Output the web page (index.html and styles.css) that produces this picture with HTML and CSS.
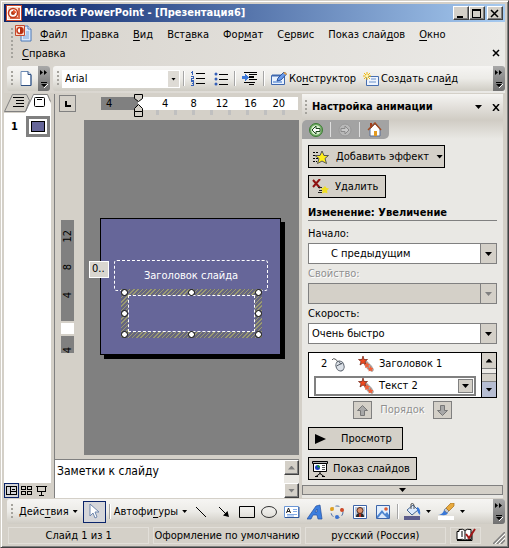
FILE: index.html
```html
<!DOCTYPE html>
<html lang="ru">
<head>
<meta charset="utf-8">
<title>Microsoft PowerPoint - [Презентация6]</title>
<link rel="stylesheet" href="styles.css">
</head>
<body>
<div class="window">
  <header class="titlebar">
    <svg class="app-icon" width="16" height="16" viewBox="0 0 16 16"><rect x=".5" y=".5" width="15" height="15" fill="#fff" stroke="#c8492c"/><path d="M2 2h12v12H2z" fill="#f6d9c8"/><path d="M13 3v10H4" fill="none" stroke="#d9694a" stroke-width="2"/><circle cx="7" cy="8" r="4.500" fill="#fff" stroke="#c23a1c" stroke-width="1.500"/><circle cx="7" cy="8" r="2" fill="#b03a18"/><path d="M7 8V5a3 3 0 0 1 3 3z" fill="#e8562e"/></svg>
    <h1>Microsoft PowerPoint - [Презентация6]</h1>
    <button class="winbtn" aria-label="Свернуть"><svg width="10" height="9" viewBox="0 0 10 9"><path d="M1 7h6v2H1z"/></svg></button>
    <button class="winbtn" aria-label="Развернуть"><svg width="10" height="9" viewBox="0 0 10 9"><path d="M0 0h9v9H0zM1 2v6h7V2z" fill-rule="evenodd"/></svg></button>
    <button class="winbtn close" aria-label="Закрыть"><svg width="10" height="9" viewBox="0 0 10 9"><path d="M1 1l7 7M8 1l-7 7" stroke="#000" stroke-width="1.500"/></svg></button>
  </header>

  <nav class="menu">
    <span class="grip"></span>
    <div class="menu-items">
      <svg class="doc-icon" width="17" height="17" viewBox="0 0 17 17"><path d="M6 1h7l3 3v12H6z" fill="#dbe9fb" stroke="#4a78b8"/><path d="M13 1v3h3" fill="#fff" stroke="#4a78b8"/><path d="M8 11h6M8 13h6M11 7h3M11 9h3" stroke="#7aa4dc"/><path d="M.5.5h9v10h-9z" fill="#f9dccb" stroke="#c8492c"/><circle cx="5" cy="5.500" r="3" fill="#fff" stroke="#c23a1c" stroke-width="1.500"/><path d="M5 5V2.500A3 3 0 0 1 5 8.500z" fill="#b52c10"/></svg>
      <button><u>Ф</u>айл</button>
      <button><u>П</u>равка</button>
      <button><u>В</u>ид</button>
      <button>Вст<u>а</u>вка</button>
      <button>Фор<u>м</u>ат</button>
      <button>С<u>е</u>рвис</button>
      <button>Показ слай<u>д</u>ов</button>
      <button><u>О</u>кно</button>
      <button class="help"><u>С</u>правка</button>
    </div>
    <button class="doc-close" aria-label="Закрыть документ"><svg width="8" height="8" viewBox="0 0 8 8"><path d="M1 1l6 6M7 1L1 7" stroke="#000" stroke-width="1.500"/></svg></button>
  </nav>

  <div class="toolbars">
    <div class="toolbar small">
      <span class="grip"></span>
      <button class="tool new" aria-label="Создать"><svg width="12" height="15" viewBox="0 0 12 15"><path d="M1 .5h7l3 3v11H1z" fill="#fff" stroke="#6d8bb5"/><path d="M11 4v10.500H1" fill="none" stroke="#2f4f80"/><path d="M8 .5v3h3" fill="#cfdcf0" stroke="#2f4f80"/></svg></button>
      <button class="overflow" aria-label="Параметры панели"><svg width="8" height="18" viewBox="0 0 8 18"><path d="M0 0l3 2.500L0 5zM4 0l3 2.500L4 5z" fill="#000"/><path d="M1 12h6v1H1zM1 14h6l-3 3z" fill="#000"/><path d="M4 18l4-4" fill="none" stroke="#fff"/></svg></button>
    </div>
    <div class="toolbar wide">
      <span class="grip"></span>
      <div class="font-box"><select aria-label="Шрифт"><option>Arial</option></select></div>
      <span class="sep"></span>
      <button class="tool" aria-label="Нумерация"><svg width="16" height="15" viewBox="0 0 16 15" shape-rendering="crispEdges"><path d="M2.500 0v4M1 1.500h1M1 5.500h2.500v2H1.500v1.500H4M1 10.500h2.500v4H1M2 12.500h2" fill="none" stroke="#3560b8"/><path d="M6 2.500h9M6 7.500h9M6 12.500h9" stroke="#000"/></svg></button>
      <button class="tool bullets" aria-label="Маркеры"><svg width="14" height="14" viewBox="0 0 14 14"><g fill="#3560b8"><circle cx="2" cy="2" r="1.500"/><circle cx="2" cy="7" r="1.500"/><circle cx="2" cy="12" r="1.500"/></g><path d="M5 2.500h9M5 7.500h9M5 12.500h9" stroke="#000"/></svg></button>
      <span class="sep"></span>
      <button class="tool" aria-label="Увеличить отступ"><svg width="15" height="13" viewBox="0 0 15 13" shape-rendering="crispEdges"><path d="M2 .5h13M7 2.500h8M7 5h5M7 7.500h8M2 10.500h11M7 12.500h5" stroke="#000"/><path d="M7 4h5v2H7z"/><path d="M0 4h3V2l4 3.500L3 9V7H0z" fill="#3c78d8"/></svg></button>
      <span class="sep"></span>
      <button class="tool text"><svg width="16" height="14" viewBox="0 0 16 14"><path d="M.5 3.500h13v9H.5z" fill="#e8f1fd" stroke="#3f68ae"/><path d="M1 3.500h12" stroke="#3f68ae" stroke-width="2"/><path d="M2 10h9" stroke="#8db0e4" stroke-width="2"/><path d="M6 9l1-3 6-6 2.500 2L10 8z" fill="#6a9bea" stroke="#2b549f"/><path d="M12 1l2-1 2 2-1 1z" fill="#e2a04a"/></svg><span>Ко<u>н</u>структор</span></button>
      <button class="tool text"><svg width="16" height="14" viewBox="0 0 16 14"><path d="M3.500 4.500h12v9h-12z" fill="#eef4fd" stroke="#476fb0"/><path d="M8 7h5M6 10h7" stroke="#6b91cc"/><path d="M4 0v8M0 4h8M1 1l6 6M7 1L1 7" stroke="#efb70d"/><circle cx="4" cy="4" r="1.500" fill="#fff7ae"/></svg><span>Создать сла<u>й</u>д</span></button>
      <button class="overflow" aria-label="Параметры панели"><svg width="8" height="18" viewBox="0 0 8 18"><path d="M0 0l3 2.500L0 5zM4 0l3 2.500L4 5z" fill="#000"/><path d="M1 12h6v1H1zM1 14h6l-3 3z" fill="#000"/><path d="M4 18l4-4" fill="none" stroke="#fff"/></svg></button>
    </div>
  </div>

  <main class="work">
    <aside class="outline">
      <div class="tabs">
        <svg width="47" height="19" viewBox="0 0 47 19"><path d="M0 0h47v19H0z" fill="#d4d0c8"/><path d="M21 19l8-18h14l4 9v9z" fill="#fff"/><path d="M.5 17.500L8.500.5h14l3 6-4 11z" fill="#d4d0c8" stroke="#808080"/><path d="M21.500 17.500L29.500.5h14l3 7" fill="none" stroke="#808080"/><path d="M9 3.500h11M12 6.500h8M12 9.500h8M9 12.500h11" stroke="#000" shape-rendering="crispEdges"/><rect x="30.500" y="3.500" width="10" height="9" rx="1" fill="#fff" stroke="#000"/><path d="M33 5.500h5" stroke="#000"/></svg>
      </div>
      <button class="thumb"><b>1</b><span class="thumb-frame"><span class="thumb-slide"></span></span></button>
      <div class="views">
        <button class="view active" aria-label="Обычный"><svg width="11" height="9" viewBox="0 0 11 9" shape-rendering="crispEdges"><path d="M.5.5h10v8H.5zM4.500 0v9M4 5.500h6M6 3.500h3" fill="none" stroke="#000"/></svg></button>
        <button class="view" aria-label="Сортировщик"><svg width="12" height="9" viewBox="0 0 12 9" shape-rendering="crispEdges"><path d="M.5.5h4v3h-4zM6.500.5h4v3h-4zM.5 5.500h4v3h-4zM6.500 5.500h4v3h-4z" fill="none" stroke="#000"/></svg></button>
        <button class="view" aria-label="Показ"><svg width="11" height="10" viewBox="0 0 11 10" shape-rendering="crispEdges"><path d="M0 .5h11M1.500 1v4.500h8V1M5.500 6v3M3 9.500h5" fill="none" stroke="#000"/></svg></button>
      </div>
    </aside>

    <section class="editor">
      <div class="ruler-row">
        <button class="tab-stop" aria-label="Табуляция"><svg width="6" height="6" viewBox="0 0 6 6"><path d="M0 0h2v4h4v2H0z"/></svg></button>
        <div class="hruler">
          <div class="hscale"><div class="margin-part"><span>4</span></div><div class="text-part"><span>4</span><span>8</span><span>12</span><span>16</span><span>20</span></div></div>
          <div class="ticks"></div>
          <svg class="indent" width="9" height="24" viewBox="0 0 9 24"><path d="M.5.5h8v4l-4 3-4-3zM.5 17.500v-3l4-4 4 4v3z" fill="#d4d0c8" stroke="#000"/><path d="M.5 17.500h8v5h-8z" fill="#d4d0c8" stroke="#000"/></svg>
        </div>
      </div>
      <div class="stage-row">
        <div class="vruler"><div class="vtop"><span>12</span><span>8</span><span>4</span></div><div class="vgap"></div><div class="vbottom"><span>4</span></div></div>
        <div class="stage">
          <div class="slide">
            <div class="title-box">Заголовок слайда</div>
            <div class="body-box"><div class="body-inner"></div>
              <i class="h nw"></i><i class="h n"></i><i class="h ne"></i><i class="h w"></i><i class="h e"></i><i class="h sw"></i><i class="h s"></i><i class="h se"></i>
            </div>
            <span class="order-tag">0..</span>
          </div>
        </div>
      </div>
      <div class="notes">
        <textarea aria-label="Заметки">Заметки к слайду</textarea>
        <div class="scroll"><button class="sb" aria-label="Вверх"><i class="up"></i></button><button class="sb" aria-label="Вниз"><i class="down"></i></button></div>
      </div>
    </section>

    <aside class="pane">
      <div class="pane-head"><span class="grip"></span><h2>Настройка анимации</h2><button class="tool" aria-label="Другие области"><i class="down"></i></button><button class="tool" aria-label="Закрыть область"><svg width="8" height="7" viewBox="0 0 8 7"><path d="M1 0l6 7M7 0L1 7" stroke="#000" stroke-width="1.500"/></svg></button></div>
      <div class="pane-nav">
        <div class="nav-tab">
          <button class="tool" aria-label="Назад"><svg width="14" height="14" viewBox="0 0 14 14"><circle cx="7" cy="7" r="6.500" fill="#72ad65" stroke="#3c7a35"/><circle cx="7" cy="7" r="4.800" fill="#d9f0d0"/><path d="M3 7l4-4v2.500h4v3H7V11z" fill="#fff" stroke="#1c451c"/></svg></button>
          <span class="sep"></span>
          <button class="tool" aria-label="Вперед"><svg width="14" height="14" viewBox="0 0 14 14"><circle cx="7" cy="7" r="6" fill="#b8b8b8" stroke="#989898"/><path d="M11 7L7 3v2.500H3v3h4V11z" fill="#c8c8c8" stroke="#8a8a8a"/></svg></button>
          <span class="sep"></span>
          <button class="tool" aria-label="Домой"><svg width="15" height="15" viewBox="0 0 15 15"><path d="M3 7v7h10V7L8 2z" fill="#fff" stroke="#5d6f94"/><path d="M3 1h2v5H3z" fill="#a33c1c"/><path d="M1 8l7-7 6 7" fill="none" stroke="#a04a20" stroke-width="1.500"/><path d="M7 9h3v5H7z" fill="#e49a20"/></svg></button>
        </div>
      </div>
      <div class="pane-body">
        <button class="btn add"><svg width="17" height="16" viewBox="0 0 17 16"><path d="M1 3.500h5M1 6.500h3M1 9.500h5M1 12.500h4" stroke="#000" stroke-dasharray="2 1"/><path d="M10 2l2 4.500h4.500L13 9.500l1.500 5L10 12l-4.500 2.500 1.500-5-4-3H8z" fill="#ffee1c" stroke="#555"/></svg>Добавить эффект<i class="down"></i></button>
        <button class="btn remove"><svg width="17" height="16" viewBox="0 0 17 16"><path d="M1 1l7 8M8 0L1 8" stroke="#8e1010" stroke-width="2"/><path d="M6 8.500h4M7 11.500h3M6 13.500h4" stroke="#222"/><path d="M13 7l1.500 2 2.500.5-2 2 .5 3-2.500-1-3 1 .5-3-2-2 2.500-.5z" fill="#f1df22"/></svg>Удалить</button>
        <h3>Изменение: Увеличение</h3>
        <label for="start">Начало:</label>
        <div class="combo indent-text"><select id="start"><option>С предыдущим</option></select></div>
        <label for="prop" class="off">Свойство:</label>
        <div class="combo off"><select id="prop" disabled><option></option></select></div>
        <label for="speed">Скорость:</label>
        <div class="combo"><select id="speed"><option>Очень быстро</option></select></div>
        <div class="effects">
          <div class="effect-list">
            <div class="effect"><span class="num">2</span><svg width="14" height="15" viewBox="0 0 14 15"><path d="M1 3q1-2 3-1t3 3" fill="none" stroke="#555"/><ellipse cx="9" cy="9" rx="4" ry="5" transform="rotate(-20 9 9)" fill="#dce1e8" stroke="#59616c"/><path d="M5.500 9l6-3M8 4.500l2 3" stroke="#59616c"/></svg><svg class="star" width="16" height="16" viewBox="0 0 16 16"><path d="M6 4l3 1 5 5 2 4-2 2-4-2-4-5z" fill="#a6a6a6"/><path d="M5 0l1 3.500h3.500L7 5.500 8 9 5 7 2 9l1-3.500L.5 3.500H4z" fill="#f04a20" stroke="#702010" stroke-width=".7"/><path d="M9 6l1 2h2l-1.500 1.500.5 2.500-2-1-2 1 .5-2.500L6 8h2zM12.500 10l1 2h2L14 13.500l.5 2-2-1-2 1 .5-2L9.500 12h2z" fill="#f26038"/></svg><span>Заголовок 1</span></div>
            <div class="effect selected"><svg class="star" width="16" height="16" viewBox="0 0 16 16"><path d="M6 4l3 1 5 5 2 4-2 2-4-2-4-5z" fill="#a6a6a6"/><path d="M5 0l1 3.500h3.500L7 5.500 8 9 5 7 2 9l1-3.500L.5 3.500H4z" fill="#f04a20" stroke="#702010" stroke-width=".7"/><path d="M9 6l1 2h2l-1.500 1.500.5 2.500-2-1-2 1 .5-2.500L6 8h2zM12.500 10l1 2h2L14 13.500l.5 2-2-1-2 1 .5-2L9.500 12h2z" fill="#f26038"/></svg><span>Текст 2</span><button class="drop" aria-label="Меню эффекта"><i class="down"></i></button></div>
          </div>
          <div class="effect-scroll"><button aria-label="Вверх"><i class="up"></i></button><span class="track"></span><span class="thumb-bar"></span><button class="hot" aria-label="Вниз"><i class="down"></i></button></div>
        </div>
        <div class="order"><button disabled aria-label="Выше"><svg width="11" height="11" viewBox="0 0 11 11"><path d="M5.500.5l5 5h-3v5h-4v-5h-3z" fill="#a8a8a8" stroke="#777"/></svg></button><span>Порядок</span><button disabled aria-label="Ниже"><svg width="11" height="11" viewBox="0 0 11 11"><path d="M5.500 10.500l5-5h-3v-5h-4v5h-3z" fill="#a8a8a8" stroke="#777"/></svg></button></div>
        <button class="btn play"><svg width="11" height="10" viewBox="0 0 11 10"><path d="M0 0l11 5-11 5z"/></svg>Просмотр</button>
        <button class="btn show"><svg width="16" height="16" viewBox="0 0 16 16"><path d="M.5.5h15v2H.5z" fill="#aaa" stroke="#000"/><path d="M1.500 2.500h13v8h-13z" fill="#fff" stroke="#000"/><circle cx="5.500" cy="6.500" r="2.500" fill="#1d3fc0"/><path d="M5.500 4a2.500 2.500 0 0 1 2.500 2.500H5.500z" fill="#18a028"/><path d="M10 4.500h3M10 6.500h3M10 8.500h3" stroke="#555"/><path d="M8 11v2M4 15.500l4-3 4 3M3 15.500h3M10 15.500h3" fill="none" stroke="#000"/></svg>Показ слайдов</button>
      </div>
      <button class="pane-more" aria-label="Прокрутить вниз"><i class="down"></i></button>
    </aside>
  </main>

  <div class="toolbar draw">
    <span class="grip"></span>
    <button class="tool text"><span>Дейс<u>т</u>вия</span><i class="down small-arrow"></i></button>
    <button class="tool pointer" aria-label="Выбор объектов"><svg width="11" height="17" viewBox="0 0 11 17"><path d="M1 1v12l3-3 2 5 2-1-2-5h4z" fill="#fff" stroke="#6f87ad"/></svg></button>
    <span class="sep"></span>
    <button class="tool text shapes"><span>Автофи<u>г</u>уры</span><i class="down small-arrow"></i></button>
    <div class="draw-tools">
      <button class="tool" aria-label="Линия"><svg width="16" height="16" viewBox="0 0 16 16"><path d="M3 3l10 10" stroke="#000"/></svg></button>
      <button class="tool" aria-label="Стрелка"><svg width="16" height="16" viewBox="0 0 16 16"><path d="M3 3l7 7" stroke="#000"/><path d="M13 13l-1.500-6L7 11.500z"/></svg></button>
      <button class="tool" aria-label="Прямоугольник"><svg width="16" height="16" viewBox="0 0 16 16"><path d="M.5 2.500h15v11H.5z" fill="none" stroke="#000"/></svg></button>
      <button class="tool" aria-label="Овал"><svg width="16" height="16" viewBox="0 0 16 16"><ellipse cx="8" cy="8" rx="7.500" ry="5.500" fill="none" stroke="#333"/></svg></button>
      <button class="tool" aria-label="Надпись"><svg width="16" height="16" viewBox="0 0 16 16"><path d="M.5 2.500h14v11H.5z" fill="#fff" stroke="#6b96d6"/><path d="M1 13.500h14V3" fill="none" stroke="#2e5596"/><path d="M2.500 9l2-5 2 5M3 7.500h3" fill="none" stroke="#222"/><path d="M9 5.500h4M9 7.500h4M3 10.500h10M3 12h7" stroke="#83abe6"/></svg></button>
      <button class="tool" aria-label="WordArt"><svg width="16" height="16" viewBox="0 0 16 16"><path d="M0 15l9-13 4-1 2 14h-4l-1-4H6l-2 4zM8 8h2V5z" fill="#3c7fe0" fill-rule="evenodd" stroke="#244f9d" stroke-width=".7"/></svg></button>
      <button class="tool" aria-label="Диаграмма"><svg width="16" height="16" viewBox="0 0 16 16"><circle cx="8" cy="8" r="6" fill="none" stroke="#4d6ea5" stroke-dasharray="4 2.500"/><circle cx="3" cy="5" r="2" fill="#e2a01c"/><circle cx="13" cy="6" r="2" fill="#d04a28"/><circle cx="8" cy="13" r="2" fill="#3a72d0"/></svg></button>
      <button class="tool" aria-label="Картинка"><svg width="16" height="16" viewBox="0 0 16 16"><path d="M1.500 1.500h13v13h-13z" fill="#fff" stroke="#3c64a8"/><path d="M3 3h10v10H3z" fill="#b9c9df"/><path d="M4 13q0-4 4-4t4 4z" fill="#2a2a2a"/><circle cx="8" cy="6.500" r="3" fill="#d9906a" stroke="#5a2d1c"/><path d="M7 10h2v3H7z" fill="#c03020"/></svg></button>
      <button class="tool" aria-label="Рисунок"><svg width="16" height="16" viewBox="0 0 16 16"><path d="M1.500 1.500h13v13h-13z" fill="#e2effd" stroke="#3c64a8"/><path d="M2 14v-2l5-6 3 4 2-2 2 3v3z" fill="#4d84cf"/><path d="M3 14l4-5 5 5z" fill="#dbe8fa"/><circle cx="11" cy="5" r="1.800" fill="#dc5a32"/></svg></button>
    </div>
    <span class="sep"></span>
    <button class="tool split" aria-label="Цвет заливки"><svg width="18" height="17" viewBox="0 0 18 17"><path d="M3 7l6-5 5 5-6 5z" fill="#dce9fb" stroke="#45658f"/><path d="M7 6V1q2-2 3 1v4" fill="none" stroke="#555"/><path d="M13 4q4 1 3 8-2-1-3-5z" fill="#3b79d8"/><path d="M0 13h16v4H0z" fill="#5d5d8b"/></svg><i class="down small-arrow"></i></button>
    <button class="tool split" aria-label="Цвет линий"><svg width="18" height="17" viewBox="0 0 18 17"><path d="M0 11q5 1 6-4l4 3q-2 4-10 1z" fill="#3b79d8"/><path d="M6 7l2-2 3 3-2 2z" fill="#c5c9d0" stroke="#66748c" stroke-width=".7"/><path d="M8 5l5-5h3v3l-5 5z" fill="#e8a93c" stroke="#a26d1c" stroke-width=".7"/><path d="M0 13h16v4H0z" fill="#fff"/></svg><i class="down small-arrow"></i></button>
    <button class="overflow" aria-label="Параметры панели"><svg width="8" height="18" viewBox="0 0 8 18"><path d="M0 0l3 2.500L0 5zM4 0l3 2.500L4 5z" fill="#000"/><path d="M1 12h6v1H1zM1 14h6l-3 3z" fill="#000"/><path d="M4 18l4-4" fill="none" stroke="#fff"/></svg></button>
  </div>

  <footer class="status">
    <span class="cell slide-no">Слайд 1 из 1</span>
    <span class="cell design">Оформление по умолчанию</span>
    <span class="cell lang">русский (Россия)</span>
    <span class="cell spell"><svg width="20" height="14" viewBox="0 0 20 14"><path d="M1 3.500h2v-2q4-1 6 1 2-2 6-1v10q-4-1-6 1-2-2-6-1H1z" fill="#fff" stroke="#000"/><path d="M9 3v10M5 4h2M5 6h2M5 8h2M1 12.500h15V4" fill="none" stroke="#000"/><path d="M10 6l3 4 6-9" fill="none" stroke="#a01818" stroke-width="2"/></svg></span>
    <svg class="size-grip" width="12" height="12" viewBox="0 0 12 12"><path d="M0 12L12 0M4 12l8-8M8 12l4-4" stroke="#808080" stroke-width="1.500"/><path d="M2 12L12 2M6 12l6-6" stroke="#fff"/></svg>
  </footer>
</div>
</body>
</html>
```
FILE: styles.css
```css
* { box-sizing: border-box; }

body {
  margin: 0;
  background: #d4d0c8;
  color: #000;
  font: 11px/14px "DejaVu Sans Condensed", "DejaVu Sans", sans-serif;
}

button, select, textarea { font: inherit; color: inherit; }
button { padding: 0; border: 0; background: none; white-space: nowrap; }
svg { display: block; flex: none; }
h1, h2, h3 { margin: 0; font-size: 11px; line-height: 14px; }
u { text-underline-offset: 2px; }

.window {
  display: flex;
  flex-direction: column;
  min-height: 100vh;
  padding: 3px 3px 2px;
  border: 1px solid #d4d0c8;
  border-right-color: #404040;
  border-bottom-color: #404040;
  box-shadow: inset 1px 1px #fff, inset -1px -1px #808080;
}

.down, .up {
  flex: none;
  width: 7px;
  height: 4px;
  background: #000;
  clip-path: polygon(0 0, 100% 0, 50% 100%);
}
.up { clip-path: polygon(50% 0, 100% 100%, 0 100%); }
.small-arrow { width: 5px; height: 3px; }

/* Title bar */
.titlebar {
  display: flex;
  align-items: center;
  height: 18px;
  padding: 0 2px;
  background: linear-gradient(90deg, #0a246a, #a6caf0);
  color: #fff;
}
.titlebar h1 { flex: 1; margin-left: 2px; white-space: nowrap; }
.winbtn, .sb {
  display: grid;
  place-items: center;
  background: #d4d0c8;
  border: 1px solid;
  border-color: #fff #404040 #404040 #fff;
  box-shadow: inset -1px -1px #808080;
}
.winbtn { width: 16px; height: 14px; }
.winbtn.close { margin-left: 2px; }

/* Menu */
.menu {
  display: flex;
  height: 44px;
  padding: 3px 4px;
  background: linear-gradient(90deg, #d7d3cc, #ebeae7);
}
.grip {
  flex: none;
  width: 2px;
  background: repeating-linear-gradient(#a5a39d 0 2px, transparent 2px 4px);
}
.menu .grip { margin: 3px 2px 3px 3px; }
.menu-items {
  display: flex;
  flex-wrap: wrap;
  flex: 1;
  align-content: flex-start;
}
.menu-items button { height: 20px; padding: 0 7px; }
.menu-items .help { flex: 1 0 100%; height: 18px; text-align: left; }
.menu-items .doc-icon { margin: 0 1px 0 0; }
.doc-close { align-self: flex-end; margin: 0 1px 6px 0; }

/* Toolbars */
.toolbars { display: flex; gap: 3px; padding: 0 0 2px 3px; background: linear-gradient(90deg, #d7d3cc, #ebeae7); }
.toolbar {
  display: flex;
  align-items: center;
  height: 25px;
  border-radius: 3px;
  background: linear-gradient(#f6f5f3, #ecebe7 50%, #cfccc4);
}
.toolbar .grip { height: 15px; margin: 0 2px 0 4px; }
.small { width: 43px; }
.wide { flex: 1; }
.tool { display: flex; align-items: center; justify-content: center; flex: none; }
.new { margin-left: 5px; }
.overflow {
  display: grid;
  place-items: center;
  flex: none;
  width: 12px;
  height: 25px;
  margin-left: auto;
  border-radius: 0 3px 3px 0;
  background: linear-gradient(#a8a8a8, #707070);
}
.sep { flex: none; width: 1px; height: 15px; background: #a6a6a6; box-shadow: 1px 0 #fff; }
.font-box { position: relative; width: 118px; height: 18px; background: #fff; }
.font-box select, .combo select {
  width: 100%;
  height: 100%;
  padding: 0 18px 0 3px;
  border: 0;
  border-radius: 0;
  background: none;
  appearance: none;
}
.font-box::before, .combo::before {
  content: "";
  position: absolute;
  inset: 0 0 0 auto;
  width: 15px;
  border-left: 1px solid #808080;
  background: #d4d0c8;
  pointer-events: none;
}
.font-box::before { inset: 1px 1px 1px auto; width: 11px; border: 0; background: #dedbd5; }
.font-box::after, .combo::after {
  content: "";
  position: absolute;
  right: 4px;
  top: 8px;
  width: 7px;
  height: 4px;
  background: #000;
  clip-path: polygon(0 0, 100% 0, 50% 100%);
  pointer-events: none;
}
.font-box::after { width: 5px; height: 3px; }
.wide .sep { margin: 0 7px 0 6px; }
.wide .grip { margin-right: 3px; }
.wide .font-box + .sep { margin: 0 6px 0 3px; }
.bullets { margin-left: 8px; }
.text { gap: 2px; }
.text + .text { margin-left: 7px; }

/* Work area */
.work { display: flex; flex: 1; padding-top: 1px; }
.outline { display: flex; flex-direction: column; flex: none; width: 47px; background: #fff; }
.thumb { display: flex; align-items: center; gap: 8px; padding: 3px 4px 0 7px; }
.thumb-frame { display: grid; padding: 5px; background: #fff; outline: 3px solid #808080; outline-offset: -3px; }
.thumb-slide { width: 14px; height: 11px; background: #666699; border: 1px solid #000; }
.views { display: flex; margin-top: auto; background: #d4d0c8; }
.view { display: grid; place-items: center; width: 15px; height: 15px; }
.view.active { border: 1px solid #0a246a; background: #d4d5d8; }

.editor {
  display: flex;
  flex-direction: column;
  flex: 1;
  min-width: 0;
  margin-left: 4px;
  box-shadow: -1px 0 #808080;
}
.ruler-row { display: flex; height: 26px; }
.tab-stop {
  display: grid;
  place-items: center;
  width: 17px;
  height: 17px;
  margin: 1px 25px 0 4px;
  border: 1px solid #808080;
}
.hruler { position: relative; flex: 1; padding: 3px 1px 0 0; }
.hscale { display: flex; height: 13px; line-height: 13px; }
.margin-part { width: 37px; padding-left: 5px; background: #808080; }
.text-part { display: flex; flex: 1; padding: 0 5px 0 13px; background: #fff; }
.text-part span { flex: 1; text-align: center; }
.ticks { height: 5px; margin-left: 55px; background: repeating-linear-gradient(90deg, #c0c0c0 0 3px, transparent 3px 18px); }
.indent { position: absolute; left: 33px; top: 0; }

.stage-row { display: flex; flex: 1; }
.vruler {
  display: flex;
  flex-direction: column;
  width: 29px;
  padding: 100px 10px 0 6px;
}
.vruler span { writing-mode: vertical-rl; transform: rotate(180deg); line-height: 13px; text-align: center; }
.vtop { display: flex; flex-direction: column; align-items: center; justify-content: space-between; height: 101px; padding: 10px 0 23px; background: #808080; }
.vgap { height: 11px; margin: 2px 0; background: #fff; }
.vbottom { display: flex; align-items: flex-end; justify-content: center; height: 17px; background: #808080; }
.stage { flex: 1; padding: 98px 18px 0 16px; background: #808080; }
.slide {
  position: relative;
  height: 137px;
  background: #666699;
  border: 1px solid #000;
  box-shadow: 4px 4px #000;
}
.title-box, .body-box, .order-tag { position: absolute; }
.title-box {
  left: 13px;
  right: 12px;
  top: 41px;
  height: 31px;
  border: 1px dashed #fff;
  border-radius: 3px;
  color: #fff;
  line-height: 29px;
  text-align: center;
}
.body-box {
  left: 20px;
  right: 18px;
  top: 70px;
  height: 49px;
  padding: 6px 7px;
  background: repeating-linear-gradient(135deg, #999973 0 1px, #666680 1px 3px);
}
.body-inner { height: 100%; background: #666699; border: 1px dashed #fff; }
.h { position: absolute; width: 7px; height: 7px; background: #fff; border: 1px solid #000; border-radius: 50%; }
.nw, .n, .ne { top: 0; }
.w, .e { top: 21px; }
.sw, .s, .se { bottom: 0; }
.nw, .w, .sw { left: 0; }
.n, .s { left: calc(50% - 4px); }
.ne, .e, .se { right: 0; }
.order-tag { left: -12px; top: 42px; width: 20px; height: 17px; padding-left: 2px; background: #d9d6d0; border: 1px solid #fff; }

.notes { display: flex; height: 38px; margin-top: 5px; box-shadow: 0 -1px #808080; }
.notes textarea { flex: 1; min-width: 0; padding: 4px 2px; border: 0; background: #fff; resize: none; outline: 0; font-size: 12px; overflow: hidden; }
.scroll { display: flex; flex-direction: column; justify-content: space-between; width: 15px; background: #ebe9e4; }
.sb { width: 15px; height: 15px; }
.sb i { background: #808080; }

/* Task pane */
.pane {
  display: flex;
  flex-direction: column;
  flex: 0 1 201px;
  margin: 0 2px 0 3px;
  padding-bottom: 3px;
  background: #e9e8e4;
}
.pane-head { display: flex; align-items: center; gap: 5px; height: 26px; padding: 0 3px; background: linear-gradient(#f5f4f2, #d0ccc4); }
.pane-head .grip { height: 14px; }
.pane-head h2 { flex: 1; white-space: nowrap; }
.pane-head .tool + .tool { margin-left: 5px; }
.pane-nav { background: linear-gradient(#d0ccc4, #e9e8e4); }
.nav-tab { display: flex; align-items: center; gap: 7px; width: 87px; height: 19px; padding-left: 7px; border-radius: 5px 0 5px 0; background: #a3a3a3; }
.nav-tab .sep { background: #dedede; box-shadow: none; }
.pane-body { display: flex; flex-direction: column; align-items: stretch; padding: 6px 6px 0; }
.btn {
  display: flex;
  align-items: center;
  align-self: flex-start;
  height: 23px;
  margin-bottom: 7px;
  padding: 0 7px 0 3px;
  border: 1px solid #000;
  background: #d4d0c8;
}
.add { gap: 7px; width: 137px; padding-right: 3px; }
.add i { margin-left: auto; }
.remove { gap: 6px; width: 78px; }
.pane-body h3 { margin: 1px 0 6px; border-bottom: 1px solid #808080; white-space: nowrap; }
.pane-body label { height: 16px; }
.pane-body label.off, .order span { color: #909090; text-shadow: 1px 1px #fff; }
.combo { position: relative; height: 21px; margin-bottom: 3px; border: 1px solid #808080; background: #fff; }
.combo.indent-text select { padding-left: 22px; }
.combo.off { background: #d4d0c8; }
.combo.off::after { background: #808080; }
.effects { display: flex; height: 46px; margin-top: 5px; border: 1px solid #000; background: #fff; }
.effect-list { flex: 1; }
.effect { display: grid; grid-template-columns: 10px 27px 21px 1fr; align-items: center; height: 22px; padding-left: 12px; }
.effect.selected { grid-template-columns: 21px 1fr 15px; height: 20px; margin: 1px 5px 0; padding: 0 1px 0 42px; border: 2px solid #808080; }
.drop { display: grid; place-items: center; width: 15px; height: 14px; border: 1px solid #808080; background: #d4d0c8; }
.effect-scroll { display: flex; flex-direction: column; width: 15px; border-left: 1px solid #000; }
.effect-scroll button { display: grid; place-items: center; height: 15px; background: #d4d0c8; }
.effect-scroll .hot { background: #b6bdd2; }
.effect-scroll .track { flex: 1; background: #edebe7; border-top: 1px solid #808080; }
.effect-scroll .thumb-bar { height: 9px; background: #d4d0c8; border: 1px solid #808080; border-width: 1px 0; }
.order { display: flex; align-items: center; justify-content: center; gap: 8px; margin: 3px 0 8px; }
.order button { display: grid; place-items: center; width: 19px; height: 18px; border: 1px solid #808080; background: #d4d0c8; }
.play { gap: 15px; width: 95px; padding-left: 6px; }
.show { gap: 5px; width: 109px; margin-bottom: 0; }
.pane-more { display: grid; place-items: center; height: 10px; margin-top: auto; border: 1px solid #808080; background: #d4d0c8; }

/* Drawing toolbar */
.draw { margin: 1px 0 0 3px; }
.draw .text { gap: 4px; margin-left: 4px; }
.pointer { width: 23px; height: 22px; margin: 0 3px 0 5px; border: 1px solid #0a246a; background: #d5d6da; }
.draw-tools { display: flex; flex: 1; justify-content: space-between; max-width: 210px; margin: 0 6px; }
.split { gap: 4px; margin-left: 6px; }
.split + .split { margin-left: 7px; }
.split + .overflow { margin-left: 28px; }

/* Status bar */
.status { display: flex; align-items: center; gap: 4px; height: 21px; padding: 2px 0 1px 4px; }
.cell { height: 17px; border: 1px solid #e2dfd9; line-height: 15px; text-align: center; white-space: nowrap; }
.slide-no { flex: 139; }
.design { flex: none; }
.lang { flex: 139; }
.spell { display: grid; place-items: center; width: 31px; }
.size-grip { align-self: flex-end; margin-left: 8px; }
```
